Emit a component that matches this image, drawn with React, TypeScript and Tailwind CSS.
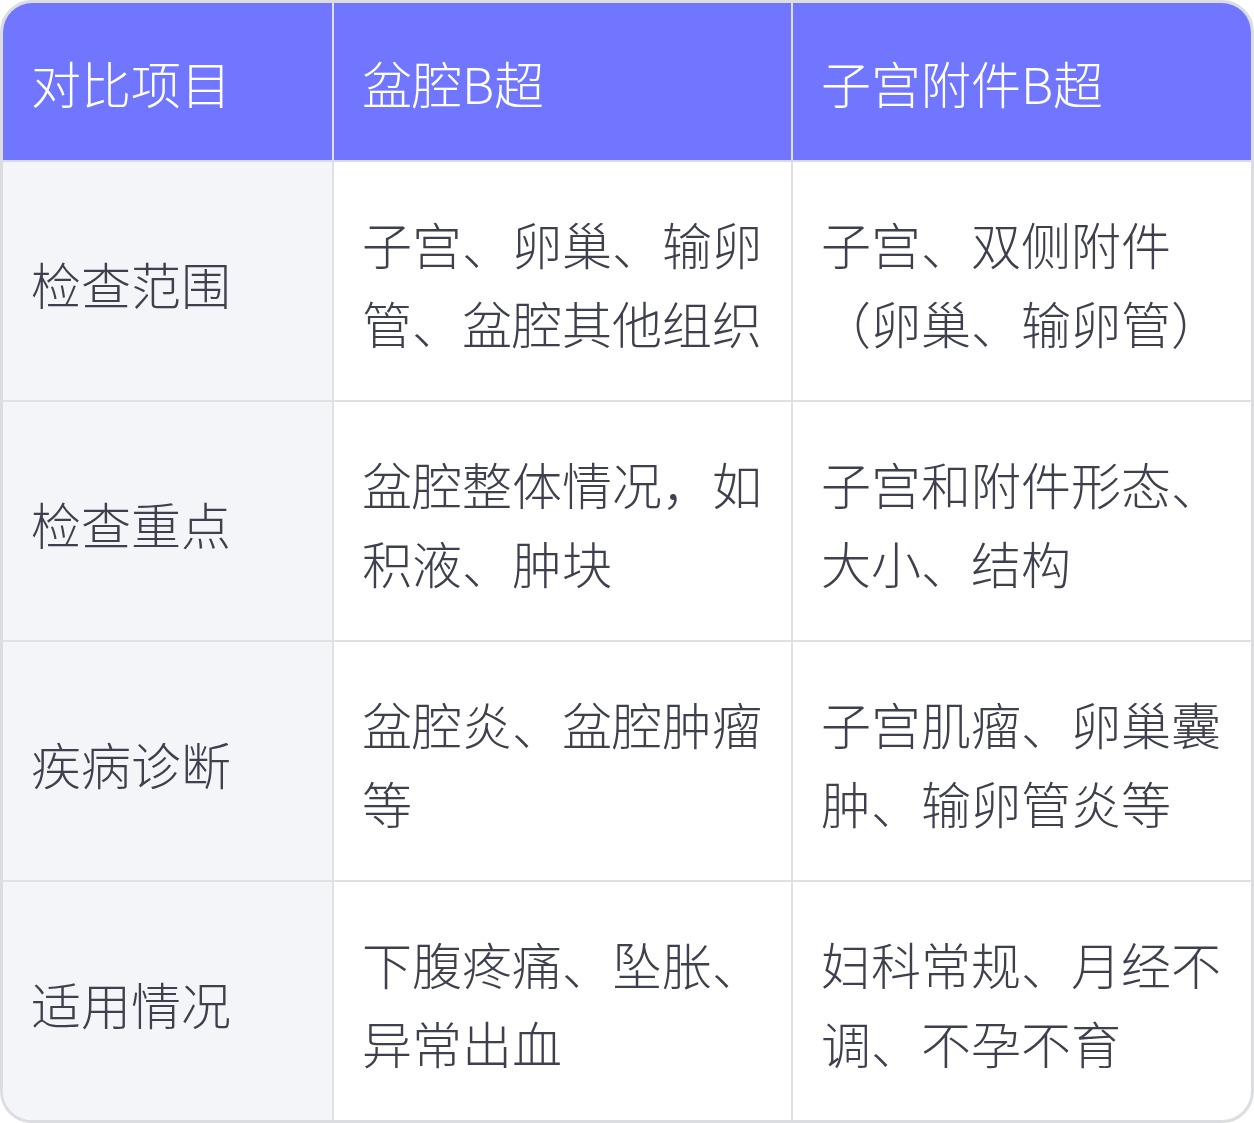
const rows = [
  {
    label: "检查范围",
    pelvic: "子宫、卵巢、输卵管、盆腔其他组织",
    uterine: "子宫、双侧附件（卵巢、输卵管）",
  },
  {
    label: "检查重点",
    pelvic: "盆腔整体情况，如积液、肿块",
    uterine: "子宫和附件形态、大小、结构",
  },
  {
    label: "疾病诊断",
    pelvic: "盆腔炎、盆腔肿瘤等",
    uterine: "子宫肌瘤、卵巢囊肿、输卵管炎等",
  },
  {
    label: "适用情况",
    pelvic: "下腹疼痛、坠胀、异常出血",
    uterine: "妇科常规、月经不调、不孕不育",
  },
];

export default function App() {
  const cell = "pl-[28px] pr-[18px] pt-[42px] pb-[38px] border-[#e0e1e7]";
  const head = "pl-[28px] pr-[18px] pt-[40px] pb-[38px] border-[#e0e1e7]";

  return (
    <div
      className="w-[1254px] h-[1123px] bg-white"
      style={{ fontFamily: '"Noto Sans CJK SC", "Noto Sans", sans-serif' }}
    >
      <div className="w-full rounded-[32px] border-[3px] border-[#dcdde1] overflow-hidden text-[50px] leading-[79px] font-light">
        <div className="grid grid-cols-[331px_459px_1fr] bg-[#7076ff] text-white border-b-2 border-[#d6d8f5]">
          <div className={`${head} border-r-2`}>对比项目</div>
          <div className={`${head} border-r-2`}>盆腔B超</div>
          <div className={head}>子宫附件B超</div>
        </div>
        {rows.map((row, i) => (
          <div
            key={row.label}
            className={`grid grid-cols-[331px_459px_1fr] text-[#3e404d] ${
              i < rows.length - 1 ? "border-b-2 border-[#e0e1e7]" : ""
            }`}
          >
            <div className={`${cell} border-r-2 bg-[#f4f5f9] flex items-center`}>
              {row.label}
            </div>
            <div className={`${cell} border-r-2`}>{row.pelvic}</div>
            <div className={cell}>{row.uterine}</div>
          </div>
        ))}
      </div>
    </div>
  );
}
